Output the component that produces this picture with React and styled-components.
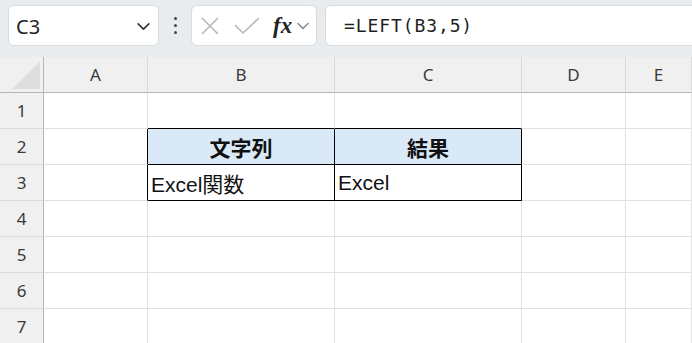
import React from "react";
import styled, { createGlobalStyle } from "styled-components";

const GlobalStyle = createGlobalStyle`
  html, body {
    margin: 0;
    padding: 0;
    background: #ffffff;
  }
  * {
    box-sizing: border-box;
  }
`;

const Page = styled.div`
  width: 692px;
  height: 343px;
  overflow: hidden;
  display: flex;
  flex-direction: column;
  font-family: "Noto Sans", "Liberation Sans", sans-serif;
`;

const Toolbar = styled.div`
  height: 57px;
  flex: none;
  background: #e9ecee;
  display: flex;
  align-items: flex-start;
  padding: 5px 0 0 8px;
  overflow: hidden;
`;

const Box = styled.div`
  height: 41px;
  background: #ffffff;
  border: 1px solid #d9dcdf;
  border-radius: 6px;
  display: flex;
  align-items: center;
`;

const NameBox = styled(Box)`
  width: 151px;
  flex: none;
  padding: 1px 7px 0 7px;
  justify-content: space-between;
  font-size: 20px;
  color: #1f1f1f;
`;

const Dots = styled.div`
  width: 32px;
  height: 41px;
  flex: none;
  display: flex;
  flex-direction: column;
  align-items: center;
  justify-content: center;
  gap: 4px;

  span {
    width: 3px;
    height: 3px;
    border-radius: 50%;
    background: #444;
  }
`;

const FxBox = styled(Box)`
  width: 126px;
  flex: none;
  padding: 0 3px 0 8px;
`;

const FxLabel = styled.span`
  font-family: "Liberation Serif", "DejaVu Serif", serif;
  font-style: italic;
  font-weight: bold;
  font-size: 23px;
  color: #222;
  margin: 0 4px 0 13px;
`;

const FormulaBox = styled(Box)`
  flex: 1;
  margin-left: 8px;
  margin-right: -20px;
  padding-left: 18px;
  font-family: "DejaVu Sans Mono", "Liberation Mono", monospace;
  font-size: 18px;
  letter-spacing: 0.9px;
  color: #1f1f1f;
`;

const Grid = styled.div`
  display: grid;
  grid-template-columns: 44px 104px 187px 187px 104px 1fr;
  grid-auto-rows: 36px;
`;

const Corner = styled.div`
  background: #f0f0f0;
  border-right: 1px solid #b5b5b5;
  border-bottom: 1px solid #b5b5b5;
  position: relative;
`;

const Triangle = styled.div`
  position: absolute;
  left: 12px;
  top: 4px;
  width: 28px;
  height: 28px;
  background: #dedede;
  clip-path: polygon(100% 0, 100% 100%, 0 100%);
`;

const ColHead = styled.div`
  background: #f0f0f0;
  border-right: 1px solid #dadada;
  border-bottom: 1px solid #b5b5b5;
  display: flex;
  align-items: center;
  justify-content: center;
  font-size: 17px;
  color: #3a3a3a;
`;

const RowHead = styled.div`
  background: #f0f0f0;
  border-right: 1px solid #b5b5b5;
  border-bottom: 1px solid #dcdcdc;
  display: flex;
  align-items: center;
  justify-content: center;
  font-size: 17px;
  color: #3a3a3a;
`;

const Cell = styled.div`
  border-right: 1px solid ${(p) => (p.$rb ? "#000" : "#e1e1e1")};
  border-bottom: 1px solid ${(p) => (p.$bb ? "#000" : "#e1e1e1")};
  background: ${(p) => (p.$head ? "#dae9f8" : "#ffffff")};
  display: flex;
  align-items: center;
  justify-content: ${(p) => (p.$head ? "center" : "flex-start")};
  padding: 1px 3px 0;
  font-family: "Liberation Sans", "Noto Sans CJK JP", sans-serif;
  font-size: 21px;
  font-weight: ${(p) => (p.$head ? "bold" : "normal")};
  color: #111;
  white-space: nowrap;
`;

const Chevron = ({ size = 14, color = "#333" }) => (
  <svg width={size} height={size} viewBox="0 0 14 14" fill="none">
    <path d="M2 4.5 L7 9.5 L12 4.5" stroke={color} strokeWidth="1.5" strokeLinecap="round" strokeLinejoin="round" />
  </svg>
);

const CrossIcon = () => (
  <svg width="20" height="20" viewBox="0 0 20 20" fill="none">
    <path d="M2 2 L18 18 M18 2 L2 18" stroke="#b8b8b8" strokeWidth="1.6" />
  </svg>
);

const CheckIcon = () => (
  <svg width="26" height="20" viewBox="0 0 26 20" fill="none" style={{ marginLeft: 14 }}>
    <path d="M1 9 L9 17 L25 2" stroke="#b8b8b8" strokeWidth="1.6" />
  </svg>
);

const columns = ["A", "B", "C", "D", "E"];

const data = {
  2: { B: "文字列", C: "結果" },
  3: { B: "Excel関数", C: "Excel" },
};

function cellProps(row, col) {
  const inTable = (row === 2 || row === 3) && (col === "B" || col === "C");
  const props = {};
  if (inTable) {
    props.$rb = true;
    props.$bb = true;
    if (row === 2) props.$head = true;
  }
  if (row === 1 && (col === "B" || col === "C")) props.$bb = true;
  if ((row === 2 || row === 3) && col === "A") props.$rb = true;
  return props;
}

export default function App() {
  const rows = [1, 2, 3, 4, 5, 6, 7];
  return (
    <Page>
      <GlobalStyle />
      <Toolbar>
        <NameBox>
          <span>C3</span>
          <Chevron size={15} />
        </NameBox>
        <Dots>
          <span />
          <span />
          <span />
        </Dots>
        <FxBox>
          <CrossIcon />
          <CheckIcon />
          <FxLabel>fx</FxLabel>
          <Chevron size={14} color="#888" />
        </FxBox>
        <FormulaBox>=LEFT(B3,5)</FormulaBox>
      </Toolbar>
      <Grid>
        <Corner>
          <Triangle />
        </Corner>
        {columns.map((c) => (
          <ColHead key={c}>{c}</ColHead>
        ))}
        {rows.map((r) => (
          <React.Fragment key={r}>
            <RowHead>{r}</RowHead>
            {columns.map((c) => (
              <Cell key={c} {...cellProps(r, c)}>
                {data[r] && data[r][c]}
              </Cell>
            ))}
          </React.Fragment>
        ))}
      </Grid>
    </Page>
  );
}
